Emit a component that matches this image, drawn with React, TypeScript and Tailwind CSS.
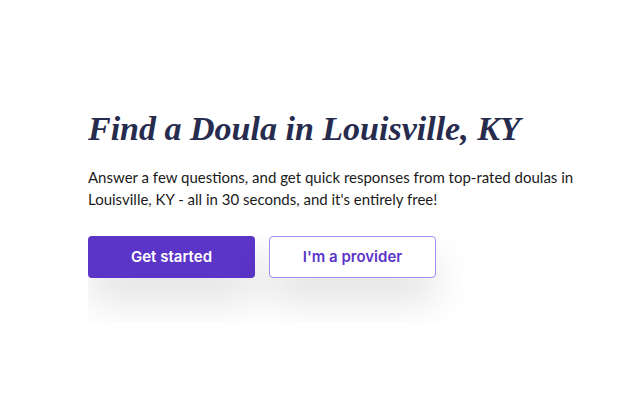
export default function App() {
  return (
    <div className="min-h-screen w-full bg-white">
      <div className="px-[88px] pt-[107px]">
        <h1
          className="whitespace-nowrap text-[34px] font-bold italic leading-[44px] text-[#272c4e]"
          style={{ fontFamily: '"Liberation Serif", "DejaVu Serif", serif' }}
        >
          Find a Doula in Louisville, KY
        </h1>
        <p
          className="mt-[15px] whitespace-nowrap text-[15px] leading-[22px] text-[#1b1b1b]"
          style={{ fontFamily: '"Lato", "Noto Sans", sans-serif' }}
        >
          Answer a few questions, and get quick responses from top-rated doulas in
          <br />
          Louisville, KY - all in 30 seconds, and it's entirely free!
        </p>
        <div className="mt-[26px] w-fit overflow-hidden pb-[45px] pr-[30px]">
          <div className="flex gap-[14px]" style={{ fontFamily: '"Inter", "Noto Sans", sans-serif' }}>
            <button className="h-[42px] w-[167px] rounded-[4px] bg-[#5b34c8] text-[15px] font-semibold text-white shadow-[0_22px_40px_rgba(0,0,0,0.12)]">
              Get started
            </button>
            <button className="h-[42px] w-[167px] rounded-[4px] border border-[#a08ff0] bg-white text-[15px] font-semibold text-[#5b34c8] shadow-[0_22px_40px_rgba(0,0,0,0.12)]">
              I'm a provider
            </button>
          </div>
        </div>
      </div>
    </div>
  )
}
